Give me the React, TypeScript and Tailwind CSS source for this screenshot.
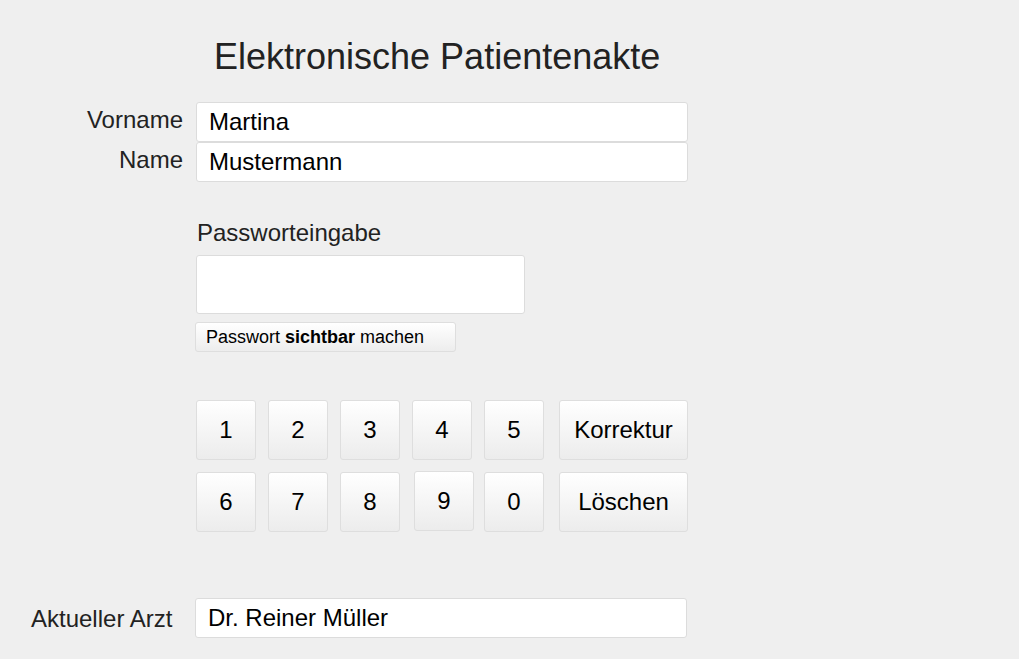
import React from "react";

const font = { fontFamily: '"Liberation Sans", Arial, Helvetica, sans-serif' };

function TextField({ value, className = "" }: { value: string; className?: string }) {
  return (
    <div
      className={
        "w-[492px] h-[40px] flex items-center pl-[12px] bg-white border border-[#dcdcdc] rounded-[3px] text-[24px] text-black " +
        className
      }
    >
      {value}
    </div>
  );
}

function Key({ label, wide, className = "" }: { label: string; wide?: boolean; className?: string }) {
  return (
    <button
      className={
        (wide ? "w-[129px] " : "w-[60px] ") +
        "h-[60px] flex items-center justify-center rounded-[3px] border border-[#dedede] bg-linear-to-b from-white to-[#ececec] text-[24px] text-black " +
        className
      }
    >
      {label}
    </button>
  );
}

export default function App() {
  return (
    <div className="min-h-screen bg-[#efefef] text-[#222] pt-[36px]" style={font}>
      <h1 className="ml-[214px] text-[36px] leading-[41px] font-normal text-[#222]">
        Elektronische Patientenakte
      </h1>

      <div className="mt-[25px] flex flex-col">
        <div className="flex items-start">
          <span className="w-[183px] mr-[13px] mt-[4px] text-right text-[24px] leading-[28px]">Vorname</span>
          <TextField value="Martina" />
        </div>
        <div className="flex items-start">
          <span className="w-[183px] mr-[13px] mt-[4px] text-right text-[24px] leading-[28px]">Name</span>
          <TextField value="Mustermann" />
        </div>
      </div>

      <div className="ml-[196px] mt-[37px] flex flex-col items-start">
        <span className="ml-px text-[24px] leading-[28px]">Passworteingabe</span>
        <div className="mt-[8px] w-[329px] h-[59px] bg-white border border-[#dcdcdc] rounded-[3px]" />
        <button className="-ml-px mt-[8px] w-[261px] h-[30px] flex items-center pl-[10px] rounded-[3px] border border-[#dedede] bg-linear-to-b from-white to-[#ededed] text-[18px] text-black">
          Passwort&nbsp;<b>sichtbar</b>&nbsp;machen
        </button>

        <div className="mt-[48px] flex flex-col gap-[12px]">
          <div className="flex items-center">
            <Key label="1" />
            <Key label="2" className="ml-[12px]" />
            <Key label="3" className="ml-[12px]" />
            <Key label="4" className="ml-[12px]" />
            <Key label="5" className="ml-[12px]" />
            <Key label="Korrektur" wide className="ml-[15px]" />
          </div>
          <div className="flex items-start">
            <Key label="6" />
            <Key label="7" className="ml-[12px]" />
            <Key label="8" className="ml-[12px]" />
            <Key label="9" className="ml-[14px] -mt-px" />
            <Key label="0" className="ml-[10px]" />
            <Key label="Löschen" wide className="ml-[15px]" />
          </div>
        </div>
      </div>

      <div className="mt-[66px] flex items-center">
        <span className="w-[195px] pl-[31px] mt-[2px] text-[24px] leading-[28px]">Aktueller Arzt</span>
        <TextField value="Dr. Reiner Müller" className="h-[39px]" />
      </div>
    </div>
  );
}
